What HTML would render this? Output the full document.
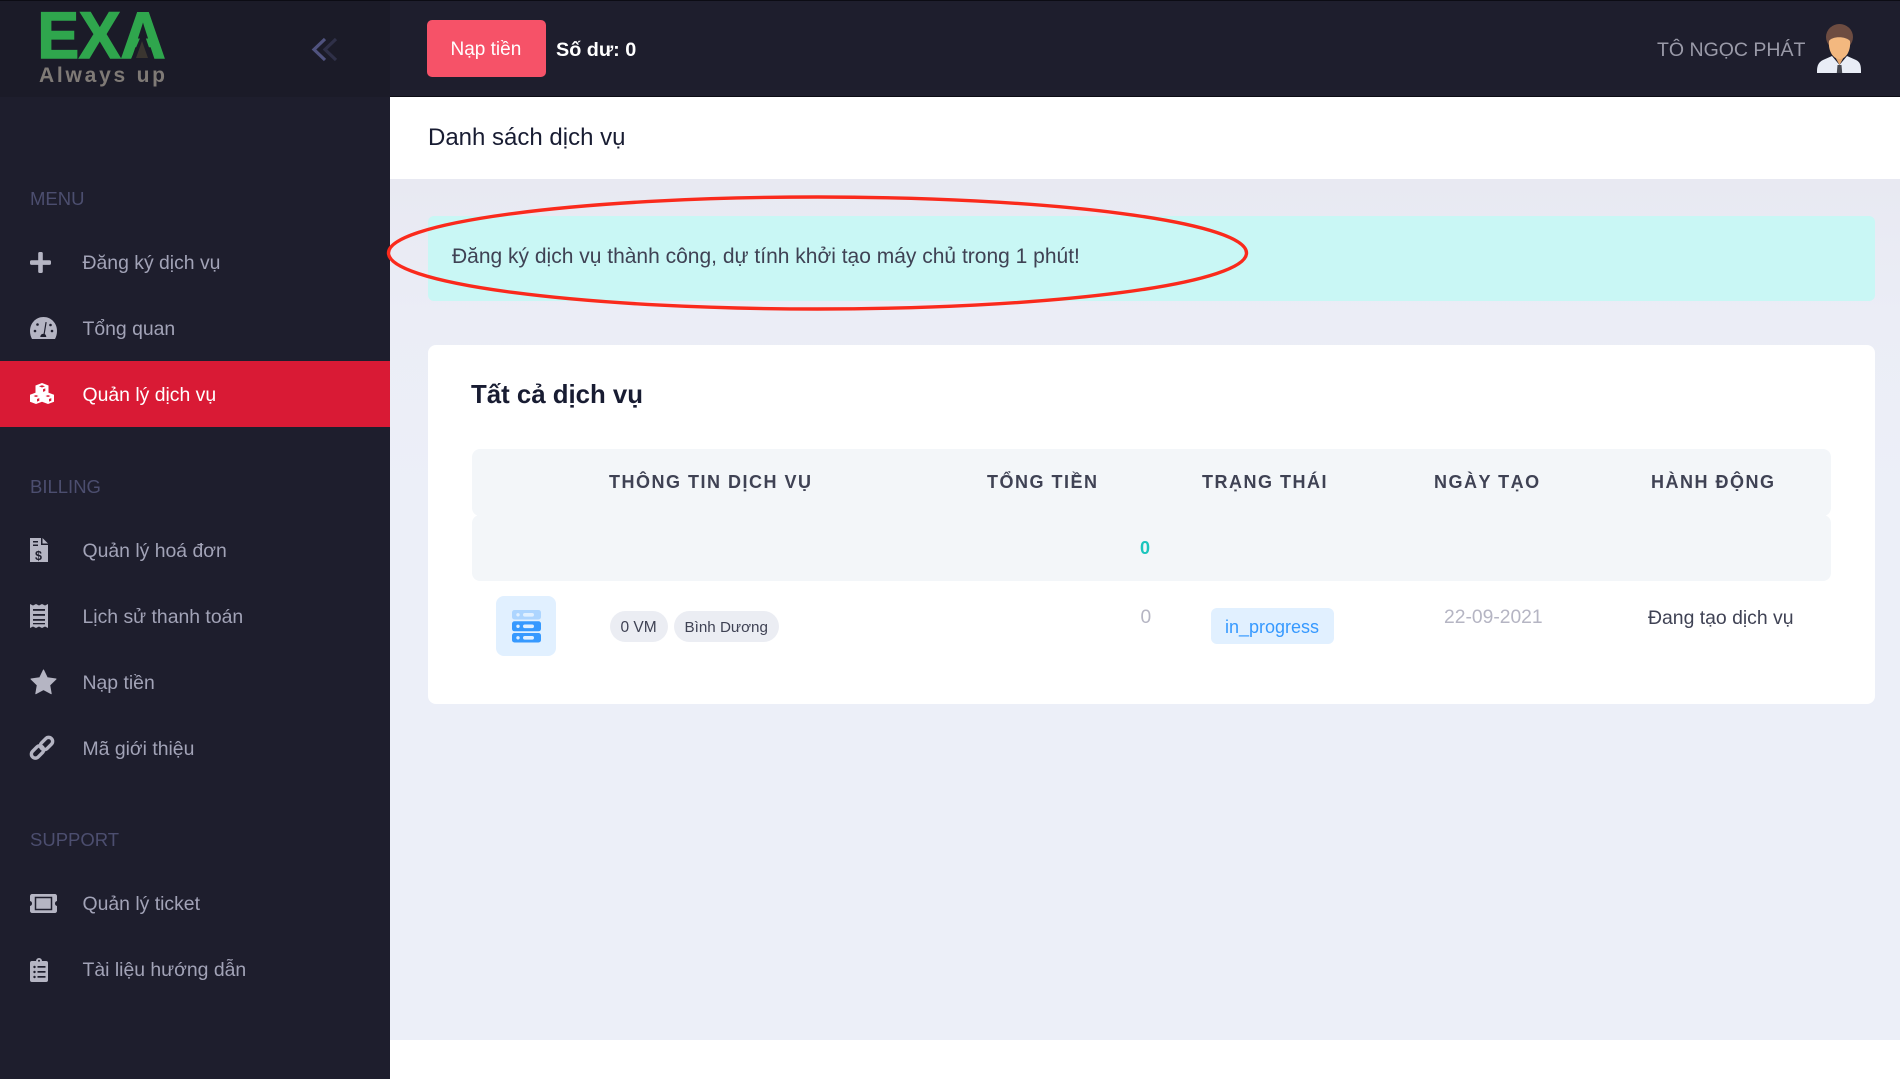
<!DOCTYPE html>
<html lang="vi">
<head>
<meta charset="utf-8">
<title>Danh sách dịch vụ</title>
<style>
html,body{margin:0;padding:0;width:1900px;height:1079px;overflow:hidden;background:#fff;font-family:"Liberation Sans",sans-serif}
.a{position:absolute}
.t{position:absolute;white-space:nowrap;line-height:30px;height:30px}
.nav{font-size:19.4px;color:#a2a3b7}
.sec{font-size:18.5px;color:#4c4e6f}
.th{font-size:18px;font-weight:bold;color:#3f4254;letter-spacing:1.5px}
svg{position:absolute;overflow:visible}
</style>
</head>
<body>
<div class="a" style="left:390px;top:97px;width:1510px;height:943px;background:linear-gradient(180deg,#e6e7f0 0,#e8e9f2 85px,#ebedf6 220px,#eceff8 400px)"></div>
<div class="a" style="left:390px;top:97px;width:1510px;height:82px;background:#fff"></div>
<div class="t" style="left:428px;top:123px;font-size:24px;color:#181c32">Danh sách dịch vụ</div>

<!-- header -->
<div class="a" style="left:0;top:0;width:1900px;height:97px;background:#1e1e2d;border-top:1px solid #0c0c14;border-bottom:1px solid #0c0c14;box-sizing:border-box"></div>
<!-- sidebar -->
<div class="a" style="left:0;top:97px;width:390px;height:982px;background:#1e1e2d"></div>
<div class="a" style="left:0;top:1px;width:390px;height:96px;background:#1b1b28"></div>

<!-- logo -->
<svg style="left:0;top:0" width="390" height="97" viewBox="0 0 390 97">
  <text x="37.500" y="58" font-family="Liberation Sans" font-weight="bold" font-size="66" fill="#2fa64d" stroke="#2fa64d" stroke-width="1.600" textLength="128" lengthAdjust="spacingAndGlyphs">EXA</text>
  <polygon points="141,36 131,59 153,59 145,36" fill="#1b1b28"/>
  <polygon points="142,41 136,58 148,58" fill="#3a3530"/>
  <text x="39" y="82" font-family="Liberation Sans" font-weight="bold" font-size="21" fill="#7f7a76" textLength="126" lengthAdjust="spacing">Always up</text>
  <polyline points="325,39 314,49.500 325,60" fill="none" stroke="#50537f" stroke-width="3.200"/>
  <polyline points="336,39 325,49.500 336,60" fill="none" stroke="#2f3048" stroke-width="3.200"/>
</svg>

<!-- header contents -->
<div class="a" style="left:427px;top:20px;width:119px;height:57px;background:#f65268;border-radius:5px"></div>
<div class="t" style="left:450.500px;top:35px;font-size:19px;color:#fff">Nạp tiền</div>
<div class="t" style="left:556px;top:34.500px;font-size:19.800px;font-weight:bold;color:#fff">Số dư: 0</div>
<div class="t" style="left:1657px;top:33.500px;font-size:19.500px;color:#9a9aa8;padding-top:1.500px">TÔ NGỌC PHÁT</div>
<svg style="left:1817px;top:24px" width="44" height="49" viewBox="0 0 44 49">
  <path d="M15 27L22.500 41 30 27z" fill="#e6a76d"/>
  <path d="M0 47C0 41 2 38 6 36L15 32 22.500 41 30 32 39 36C43 38 44 41 44 47V49H0z" fill="#e9edf6"/>
  <path d="M20.500 41h4l.7 8h-5.400z" fill="#454750"/>
  <ellipse cx="22.500" cy="13" rx="13.500" ry="13" fill="#6d4c41"/>
  <path d="M12 17C15 12 29 12 33 17 34 26 29.500 35 22.500 35 15.500 35 11 26 12 17z" fill="#f3b87f"/>
</svg>

<!-- sidebar labels -->
<div class="t sec" style="left:30px;top:184px">MENU</div>
<div class="t nav" style="left:82.500px;top:247.500px">Đăng ký dịch vụ</div>
<div class="t nav" style="left:82.500px;top:313.500px">Tổng quan</div>
<div class="a" style="left:0;top:361px;width:390px;height:66px;background:#d91a35"></div>
<div class="t nav" style="left:82.500px;top:379.500px;color:#fff">Quản lý dịch vụ</div>
<div class="t sec" style="left:30px;top:472px">BILLING</div>
<div class="t nav" style="left:82.500px;top:535.500px">Quản lý hoá đơn</div>
<div class="t nav" style="left:82.500px;top:601.500px">Lịch sử thanh toán</div>
<div class="t nav" style="left:82.500px;top:667.500px">Nạp tiền</div>
<div class="t nav" style="left:82.500px;top:733.500px">Mã giới thiệu</div>
<div class="t sec" style="left:30px;top:825px">SUPPORT</div>
<div class="t nav" style="left:82.500px;top:888.500px">Quản lý ticket</div>
<div class="t nav" style="left:82.500px;top:954.500px">Tài liệu hướng dẫn</div>

<!-- sidebar icons -->
<svg style="left:0;top:0" width="390" height="1079" viewBox="0 0 390 1079">
  <g fill="#b5b5c3">
    <!-- plus -->
    <rect x="30" y="260.300" width="21" height="4.600" rx="1.500"/>
    <rect x="38.200" y="252" width="4.600" height="21" rx="1.500"/>
    <!-- tachometer -->
    <path d="M43.500 317C35.500 317 30 323.500 30 331c0 3 .7 5.500 2 8h23c1.300-2.500 2-5 2-8 0-7.500-5.500-14-13.500-14z"/>
    <!-- file invoice -->
    <path d="M30 538h11v7h7v17H30z"/>
    <path d="M42.500 538l5.500 5.500h-5.500z"/>
    <!-- receipt -->
    <path d="M30 604l3 1.500 3-1.500 3 1.500 3-1.500 3 1.500 3-1.500v24l-3-1.500-3 1.500-3-1.500-3 1.500-3-1.500-3 1.500z"/>
    <!-- star -->
    <path d="M43.500 670l3.800 7.800 8.700 1.200-6.300 6.100 1.500 8.600-7.700-4.100-7.700 4.100 1.500-8.600L31 679l8.700-1.200z" stroke="#b5b5c3" stroke-width="1" stroke-linejoin="round"/>
    <!-- ticket -->
    <path d="M32 894h23c1 0 2 1 2 2v5c-1.500.4-2 1.300-2 2.500s.5 2.100 2 2.500v5c0 1-1 2-2 2H32c-1 0-2-1-2-2v-5c1.500-.4 2-1.300 2-2.500s-.5-2.100-2-2.500v-5c0-1 1-2 2-2z"/>
    <!-- clipboard -->
    <rect x="30" y="961" width="18" height="21" rx="2"/>
    <circle cx="39" cy="961" r="3"/>
  </g>
  <!-- tachometer details -->
  <g fill="#1e1e2d">
    <path d="M45.500 322l1.200.3-2 11.700c1 .6 1.600 1.700 1.600 3h-6c0-2 1.500-3.400 3.300-3.300z"/>
    <circle cx="35" cy="331" r="1.300"/><circle cx="37.500" cy="324.500" r="1.300"/>
    <circle cx="50.500" cy="325" r="1.300"/><circle cx="52" cy="331" r="1.300"/>
  </g>
  <!-- file details -->
  <g fill="#1e1e2d">
    <rect x="33" y="541" width="5" height="1.500"/><rect x="33" y="544.500" width="5" height="1.500"/>
    <text x="35" y="560" font-family="Liberation Sans" font-weight="bold" font-size="12.500">$</text>
  </g>
  <!-- receipt lines -->
  <g fill="#1e1e2d">
    <rect x="33" y="609" width="12" height="1.800"/><rect x="33" y="614" width="12" height="1.800"/><rect x="33" y="619" width="12" height="1.800"/><rect x="33" y="623" width="12" height="1.300"/>
  </g>
  <!-- link -->
  <g fill="none" stroke="#b5b5c3" stroke-width="3.400">
    <rect x="-7" y="-4" width="14" height="8" rx="4" transform="translate(37.500 752) rotate(-45)"/>
    <rect x="-7" y="-4" width="14" height="8" rx="4" transform="translate(46.500 743.500) rotate(-45)"/>
  </g>
  <!-- ticket inner -->
  <rect x="35.500" y="897.500" width="16" height="12" fill="none" stroke="#1e1e2d" stroke-width="1.500"/>
  <!-- clipboard lines -->
  <g fill="#1e1e2d">
    <circle cx="34.500" cy="967" r="1.200"/><circle cx="34.500" cy="972" r="1.200"/><circle cx="34.500" cy="977" r="1.200"/>
    <rect x="37.500" y="966" width="8" height="1.700"/><rect x="37.500" y="971" width="8" height="1.700"/><rect x="37.500" y="976" width="8" height="1.700"/>
    <circle cx="39" cy="960.800" r="1"/>
  </g>
  <!-- cubes -->
  <g fill="#fff">
    <path d="M42 383l6.500 2.500v7.300L42 395.300l-6.500-2.500v-7.300z"/>
    <path d="M36 392.500l6 2.300v7l-6 2.200-6-2.200v-7z"/>
    <path d="M48 392.500l6 2.300v7l-6 2.200-6-2.200v-7z"/>
  </g>
  <g fill="#d91a35">
    <path d="M39 386.300l3 1.200 3-1.200-3-1.100z"/>
    <path d="M43 389.300l2.300-.9v2.600l-2.300.9z"/>
    <path d="M33.500 396l2.500 1 2.500-1-2.500-.9z"/>
    <path d="M37 399l2.300-.9v2.600l-2.300.9z"/>
    <path d="M45.500 396l2.500 1 2.500-1-2.500-.9z"/>
    <path d="M49 399l2.300-.9v2.600l-2.300.9z"/>
  </g>
</svg>

<!-- alert -->
<div class="a" style="left:428px;top:216px;width:1446.500px;height:85px;background:#c9f7f5;border-radius:6px"></div>
<div class="t" style="left:452px;top:242px;font-size:21px;color:#3f4254">Đăng ký dịch vụ thành công, dự tính khởi tạo máy chủ trong 1 phút!</div>

<!-- card -->
<div class="a" style="left:428px;top:345px;width:1446.500px;height:359px;background:#fff;border-radius:8px"></div>
<div class="t" style="left:471px;top:380px;font-size:25.800px;font-weight:bold;color:#181c32">Tất cả dịch vụ</div>
<div class="a" style="left:472px;top:449px;width:1359px;height:67px;background:#f3f6f9;border-radius:8px"></div>
<div class="a" style="left:472px;top:515px;width:1359px;height:66px;background:#f3f6f9;border-radius:8px"></div>
<div class="t th" style="left:609px;top:467px">THÔNG TIN DỊCH VỤ</div>
<div class="t th" style="left:987px;top:467px">TỔNG TIỀN</div>
<div class="t th" style="left:1202px;top:467px">TRẠNG THÁI</div>
<div class="t th" style="left:1434px;top:467px">NGÀY TẠO</div>
<div class="t th" style="left:1651px;top:467px">HÀNH ĐỘNG</div>
<div class="t" style="left:1140px;top:533px;font-size:18px;font-weight:bold;color:#1bc5bd">0</div>

<!-- row -->
<div class="a" style="left:496px;top:596px;width:60px;height:60px;background:#e1f0ff;border-radius:8px"></div>
<svg style="left:496px;top:596px" width="60" height="60" viewBox="0 0 60 60">
  <rect x="16" y="14" width="29" height="9.500" rx="2.500" fill="#3699ff" opacity=".3"/>
  <rect x="16" y="25.300" width="29" height="10" rx="2.500" fill="#3699ff"/>
  <rect x="16" y="37" width="29" height="9.500" rx="2.500" fill="#3699ff"/>
  <g fill="#e1f0ff">
    <circle cx="22" cy="18.800" r="1.700"/><rect x="27" y="17" width="11" height="3.600" rx="1.800"/>
    <circle cx="22" cy="30.300" r="1.700"/><rect x="27" y="28.500" width="11" height="3.600" rx="1.800"/>
    <circle cx="22" cy="41.800" r="1.700"/><rect x="27" y="40" width="11" height="3.600" rx="1.800"/>
  </g>
</svg>
<div class="a" style="left:610px;top:611px;width:58px;height:31px;background:#ebedf3;border-radius:15.500px"></div>
<div class="a" style="left:674px;top:611px;width:105px;height:31px;background:#ebedf3;border-radius:15.500px"></div>
<div class="t" style="left:620.500px;top:612.500px;font-size:15.500px;color:#3f4254">0 VM</div>
<div class="t" style="left:684.500px;top:612.500px;font-size:15.200px;color:#3f4254">Bình Dương</div>
<div class="t" style="left:1140.500px;top:603px;font-size:19.200px;color:#b5b5c3">0</div>
<div class="a" style="left:1211px;top:608px;width:123px;height:36px;background:#e1f0ff;border-radius:6px"></div>
<div class="t" style="left:1225px;top:611.500px;font-size:18px;color:#3699ff">in_progress</div>
<div class="t" style="left:1444px;top:603px;font-size:19.300px;color:#b5b5c3">22-09-2021</div>
<div class="t" style="left:1648px;top:603px;font-size:19.400px;color:#3f4254">Đang tạo dịch vụ</div>

<!-- annotation ellipse -->
<svg style="left:0;top:0" width="1900" height="1079" viewBox="0 0 1900 1079">
  <ellipse cx="817.500" cy="253" rx="429" ry="56" fill="none" stroke="#fa2a1c" stroke-width="3.400"/>
</svg>
</body>
</html>
